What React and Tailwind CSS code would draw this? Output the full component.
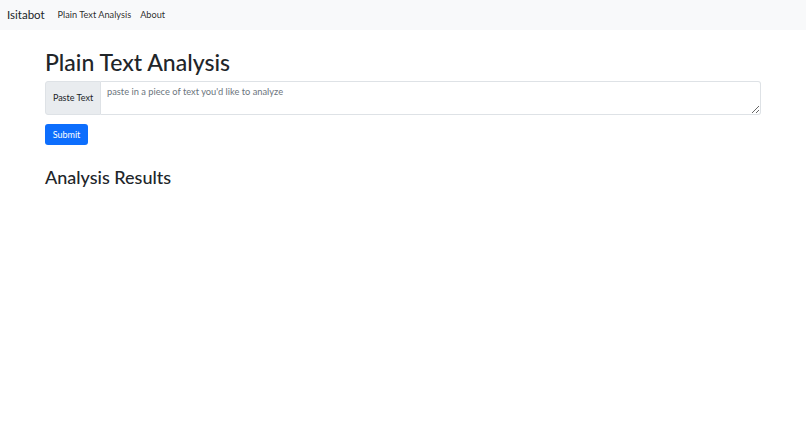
export default function App() {
  return (
    <div className="min-h-screen bg-white text-[#212529]" style={{ fontFamily: "Lato, 'Noto Sans', sans-serif" }}>
      {/* navbar */}
      <nav className="h-[30px] bg-[#f8f9fa] flex items-center px-[7px]">
        <span className="text-[11.5px] mr-[13px]">Isitabot</span>
        <div className="flex items-center gap-[9px] text-[9.2px] text-[#000000d9]">
          <span>Plain Text Analysis</span>
          <span>About</span>
        </div>
      </nav>

      <main className="px-[45px] w-[806px]">
        <h1 className="text-[23px] leading-none font-medium mt-[21px] mb-[7px]">Plain Text Analysis</h1>

        <div className="flex w-[716px] h-[34px]">
          <div className="w-[56px] shrink-0 bg-[#e9ecef] border border-[#dee2e6] rounded-l-[3px] flex items-center justify-center text-[9px]">
            Paste Text
          </div>
          <textarea
            className="flex-1 border border-l-0 border-[#dee2e6] rounded-r-[3px] px-[6px] py-[3px] text-[9.3px] leading-[13px] outline-none placeholder:text-[#6c757d] resize-y"
            placeholder="paste in a piece of text you'd like to analyze"
          />
        </div>

        <button className="mt-[9px] w-[43px] h-[21px] bg-[#0d6efd] text-white text-[9px] rounded-[3px] flex items-center justify-center">
          Submit
        </button>

        <h2 className="text-[18px] leading-none font-medium mt-[23px]">Analysis Results</h2>
      </main>
    </div>
  );
}
